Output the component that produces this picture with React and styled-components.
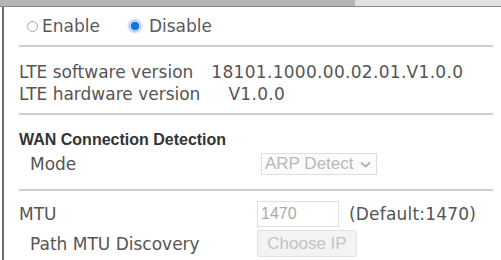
import React from "react";
import styled, { createGlobalStyle } from "styled-components";

const Global = createGlobalStyle`
  html, body { margin: 0; padding: 0; background: #fff; overflow: hidden; }
  body { font-family: "DejaVu Sans", Verdana, sans-serif; }
`;

const Page = styled.div`
  width: 501px;
  height: 260px;
  display: flex;
  flex-direction: column;
  background: #fff;
`;

const TabStrip = styled.div`
  display: flex;
  height: 6px;
  border-bottom: 1px solid #8a8a8a;
`;

const Tab = styled.div`
  width: ${(p) => p.$w}px;
  flex: ${(p) => (p.$w ? "none" : "1")};
  background: ${(p) => (p.$active ? "#b4b4b4" : "#e0e0e0")};
`;

const Panel = styled.div`
  flex: 1;
  margin-left: 2px;
  border-left: 2px solid #6d6d6d;
  padding: 0 8px 0 15px;
  display: flex;
  flex-direction: column;
  color: #555;
  font-size: 17px;
`;

const RadioRow = styled.div`
  display: flex;
  align-items: center;
  height: 38px;
  padding-left: 8px;
  gap: 29px;
`;

const RadioLabel = styled.label`
  display: flex;
  align-items: center;
  gap: ${(p) => (p.$on ? 8 : 4)}px;
  font-size: 17px;
  color: #5a5a5a;
`;

const RadioDot = styled.span`
  width: ${(p) => (p.$on ? 12 : 11)}px;
  height: ${(p) => (p.$on ? 12 : 11)}px;
  border-radius: 50%;
  box-sizing: border-box;
  border: ${(p) => (p.$on ? "1px solid #9cc4ee" : "1px solid #a8a8a8")};
  background: ${(p) => (p.$on ? "radial-gradient(circle, #1a73d9 0 3.8px, #d6e8fb 4.6px)" : "#fff")};
  box-shadow: ${(p) => (p.$on ? "0 0 2px 1px #b6d6f6" : "none")};
`;

const Rule = styled.hr`
  margin: 0;
  border: none;
  height: 2px;
  background: #cfcfcf;
`;

const InfoBlock = styled.div`
  padding: 14px 0 8px;
  display: flex;
  flex-direction: column;
`;

const InfoLine = styled.div`
  display: flex;
  height: 22px;
  align-items: center;
  white-space: nowrap;
  color: #555;
`;

const Value = styled.span`
  margin-left: ${(p) => p.$gap}px;
  letter-spacing: 0.3px;
`;

const Section = styled.div`
  display: grid;
  grid-template-columns: 238px 1fr;
  align-items: center;
  padding: ${(p) => p.$pad};
  row-gap: ${(p) => p.$rowGap || 0}px;
`;

const Heading = styled.div`
  grid-column: 1 / -1;
  font-family: "Liberation Sans", Arial, sans-serif;
  font-weight: bold;
  font-size: 16px;
  color: #333;
  height: 20px;
  display: flex;
  align-items: center;
`;

const Label = styled.div`
  padding-left: ${(p) => (p.$indent ? 11 : 0)}px;
  height: ${(p) => p.$h}px;
  display: flex;
  align-items: center;
  white-space: nowrap;
  color: #555;
`;

const Controls = styled.div`
  display: flex;
  align-items: center;
  gap: 10px;
  padding-left: ${(p) => p.$pl || 0}px;
`;

const FakeSelect = styled.div`
  height: 22px;
  box-sizing: border-box;
  border: 1px solid #dedede;
  display: flex;
  align-items: center;
  padding: 0 5px 0 3px;
  gap: 6px;
  font-family: "Liberation Sans", Arial, sans-serif;
  font-size: 17px;
  color: #b8b8b8;
  background: #fbfbfb;
`;

const Input = styled.div`
  width: 82px;
  height: 26px;
  box-sizing: border-box;
  border: 1px solid #e0e0e0;
  padding-left: 3px;
  display: flex;
  align-items: center;
  font-family: "Liberation Sans", Arial, sans-serif;
  font-size: 16px;
  color: #aaa;
`;

const Hint = styled.span`
  color: #555;
  letter-spacing: 0.2px;
`;

const Button = styled.div`
  width: 100px;
  height: 27px;
  box-sizing: border-box;
  border: 1px solid #e2e2e2;
  border-radius: 2px;
  background: #f3f3f3;
  display: flex;
  align-items: center;
  justify-content: center;
  font-family: "Liberation Sans", Arial, sans-serif;
  font-size: 17px;
  color: #c4c4c4;
`;

const Chevron = () => (
  <svg width="11" height="7" viewBox="0 0 11 7">
    <path d="M1 1.5 L5.5 5.5 L10 1.5" fill="none" stroke="#9fb3c8" strokeWidth="1.7" />
  </svg>
);

export default function App() {
  return (
    <Page>
      <Global />
      <TabStrip>
        <Tab $w={355} $active />
        <Tab />
      </TabStrip>
      <Panel>
        <RadioRow>
          <RadioLabel>
            <RadioDot />
            Enable
          </RadioLabel>
          <RadioLabel $on>
            <RadioDot $on />
            Disable
          </RadioLabel>
        </RadioRow>
        <Rule />
        <InfoBlock>
          <InfoLine>
            LTE software version<Value $gap={18}>18101.1000.00.02.01.V1.0.0</Value>
          </InfoLine>
          <InfoLine>
            LTE hardware version<Value $gap={28}>V1.0.0</Value>
          </InfoLine>
        </InfoBlock>
        <Rule />
        <Section $pad="15px 0 13px" $rowGap={2}>
          <Heading>WAN Connection Detection</Heading>
          <Label $indent $h={24}>Mode</Label>
          <Controls $pl={4}>
            <FakeSelect>
              ARP Detect <Chevron />
            </FakeSelect>
          </Controls>
        </Section>
        <Rule />
        <Section $pad="10px 0 0" $rowGap={3}>
          <Label $h={26}>MTU</Label>
          <Controls>
            <Input>1470</Input>
            <Hint>(Default:1470)</Hint>
          </Controls>
          <Label $indent $h={27}>Path MTU Discovery</Label>
          <Controls>
            <Button>Choose IP</Button>
          </Controls>
        </Section>
      </Panel>
    </Page>
  );
}
